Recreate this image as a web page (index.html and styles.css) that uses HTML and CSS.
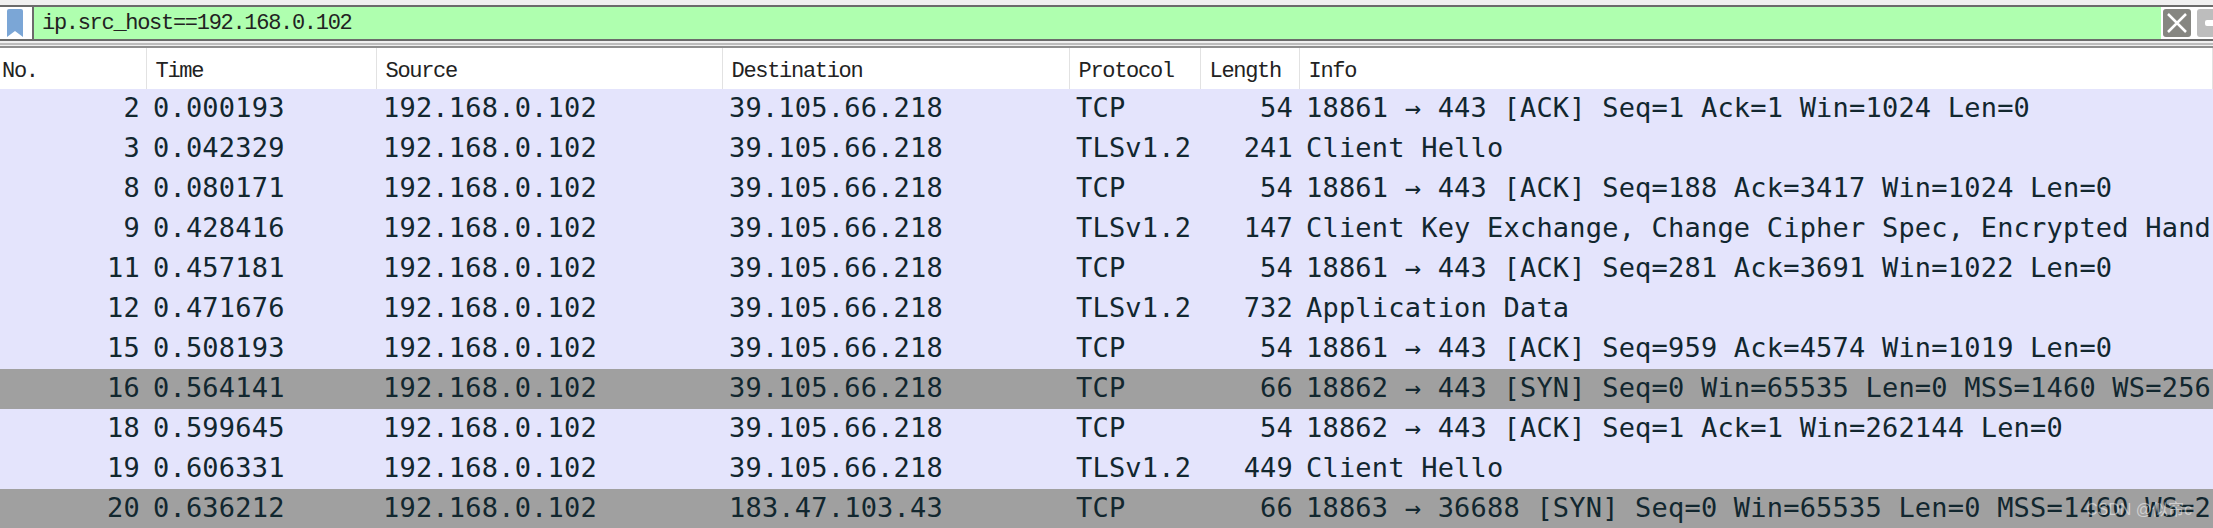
FILE: index.html
```html
<!DOCTYPE html>
<html lang="en">
<head>
    <meta charset="UTF-8">
    <meta name="viewport" content="width=device-width, initial-scale=1.0">
    <title>Packet list</title>
    <link rel="stylesheet" href="styles.css">
</head>
<body>
    <div class="filter-bar">
        <span class="bookmark">
            <svg width="16" height="28" viewBox="0 0 16 28"><path d="M2 0h12a2 2 0 0 1 2 2v26l-8-6-8 6V2a2 2 0 0 1 2-2z" fill="#7ba6d6"/></svg>
        </span>
        <div class="filter-input">ip.src_host==192.168.0.102</div>
        <span class="btn btn-clear">
            <svg width="28" height="28" viewBox="0 0 28 28"><path d="M5 5l18 18M23 5L5 23" stroke="#fff" stroke-width="2.5" fill="none"/></svg>
        </span>
        <span class="btn btn-more"><span class="more-dash"></span></span>
    </div>
    <div class="divider"></div>

    <table class="packets">
        <colgroup>
            <col class="col-no">
            <col class="col-time">
            <col class="col-source">
            <col class="col-dest">
            <col class="col-proto">
            <col class="col-length">
            <col class="col-info">
        </colgroup>
        <thead>
            <tr>
                <th>No.</th>
                <th>Time</th>
                <th>Source</th>
                <th>Destination</th>
                <th>Protocol</th>
                <th>Length</th>
                <th>Info</th>
            </tr>
        </thead>
        <tbody>
            <tr><td class="num">2</td><td>0.000193</td><td>192.168.0.102</td><td>39.105.66.218</td><td>TCP</td><td class="num">54</td><td>18861 → 443 [ACK] Seq=1 Ack=1 Win=1024 Len=0</td></tr>
            <tr><td class="num">3</td><td>0.042329</td><td>192.168.0.102</td><td>39.105.66.218</td><td>TLSv1.2</td><td class="num">241</td><td>Client Hello</td></tr>
            <tr><td class="num">8</td><td>0.080171</td><td>192.168.0.102</td><td>39.105.66.218</td><td>TCP</td><td class="num">54</td><td>18861 → 443 [ACK] Seq=188 Ack=3417 Win=1024 Len=0</td></tr>
            <tr><td class="num">9</td><td>0.428416</td><td>192.168.0.102</td><td>39.105.66.218</td><td>TLSv1.2</td><td class="num">147</td><td>Client Key Exchange, Change Cipher Spec, Encrypted Hand</td></tr>
            <tr><td class="num">11</td><td>0.457181</td><td>192.168.0.102</td><td>39.105.66.218</td><td>TCP</td><td class="num">54</td><td>18861 → 443 [ACK] Seq=281 Ack=3691 Win=1022 Len=0</td></tr>
            <tr><td class="num">12</td><td>0.471676</td><td>192.168.0.102</td><td>39.105.66.218</td><td>TLSv1.2</td><td class="num">732</td><td>Application Data</td></tr>
            <tr><td class="num">15</td><td>0.508193</td><td>192.168.0.102</td><td>39.105.66.218</td><td>TCP</td><td class="num">54</td><td>18861 → 443 [ACK] Seq=959 Ack=4574 Win=1019 Len=0</td></tr>
            <tr class="syn"><td class="num">16</td><td>0.564141</td><td>192.168.0.102</td><td>39.105.66.218</td><td>TCP</td><td class="num">66</td><td>18862 → 443 [SYN] Seq=0 Win=65535 Len=0 MSS=1460 WS=256</td></tr>
            <tr><td class="num">18</td><td>0.599645</td><td>192.168.0.102</td><td>39.105.66.218</td><td>TCP</td><td class="num">54</td><td>18862 → 443 [ACK] Seq=1 Ack=1 Win=262144 Len=0</td></tr>
            <tr><td class="num">19</td><td>0.606331</td><td>192.168.0.102</td><td>39.105.66.218</td><td>TLSv1.2</td><td class="num">449</td><td>Client Hello</td></tr>
            <tr class="syn"><td class="num">20</td><td>0.636212</td><td>192.168.0.102</td><td>183.47.103.43</td><td>TCP</td><td class="num">66</td><td>18863 → 36688 [SYN] Seq=0 Win=65535 Len=0 MSS=1460 WS=2</td></tr>
        </tbody>
    </table>

    <div class="watermark">CSDN @似帘c</div>
</body>
</html>
```

FILE: styles.css
```css
html, body {
    height: 100%;
}

body {
    margin: 0;
    padding-top: 5px;
    box-sizing: border-box;
    background-color: #f0f0f0;
    overflow: hidden;
    position: relative;
}

.filter-bar {
    display: flex;
    height: 32px;
    border-top: 2px solid #6b6b6b;
    border-bottom: 2px solid #6b6b6b;
    background: white;
}

.bookmark {
    width: 34px;
    padding: 2px 0 0 7px;
    box-sizing: border-box;
    border-right: 2px solid #6b6b6b;
    line-height: 0;
}

.filter-input {
    flex: 1;
    padding: 2px 0 0 8px;
    background-color: #afffaf;
    color: #222;
    font-family: "Liberation Mono", monospace;
    font-size: 22px;
    letter-spacing: -1.3px;
    line-height: 30px;
}

.btn {
    flex: none;
    width: 28px;
    height: 28px;
    margin-top: 2px;
    border-radius: 3px;
    line-height: 0;
}

.btn-clear {
    margin-left: 2px;
    background-color: #868681;
}

.btn-more {
    margin-left: 6px;
    margin-right: -12px;
    padding: 11px 0 0 8px;
    box-sizing: border-box;
    background-color: #bdbdbd;
}

.more-dash {
    display: block;
    height: 6px;
    border-radius: 2px;
    background: white;
}

.divider {
    height: 5px;
    margin-top: 2px;
    border-top: 2px solid #bcbcbc;
    border-bottom: 2px solid #8f8f8f;
    box-sizing: border-box;
}

.packets {
    width: 2213px;
    table-layout: fixed;
    border-collapse: collapse;
    background: white;
    font-family: "DejaVu Sans Mono", monospace;
}

.col-no { width: 146px; }
.col-time { width: 230px; }
.col-source { width: 346px; }
.col-dest { width: 347px; }
.col-proto { width: 131px; }
.col-length { width: 99px; }

th {
    box-sizing: border-box;
    height: 41px;
    padding: 5px 0 0 9px;
    border-right: 1px solid #e2e2e2;
    font-family: "Liberation Mono", monospace;
    font-size: 22px;
    font-weight: normal;
    letter-spacing: -1.3px;
    text-align: left;
    color: #222;
}

th:first-child {
    padding-left: 2px;
}

td {
    box-sizing: border-box;
    height: 40px;
    padding: 0 0 3px 7px;
    font-size: 27px;
    letter-spacing: 0.2px;
    color: #12272f;
    white-space: nowrap;
    overflow: hidden;
    background-color: #e4e4fc;
}

td.num {
    padding: 0 6px 3px 0;
    text-align: right;
}

.syn td {
    background-color: #a0a0a0;
}

.watermark {
    position: absolute;
    right: 21px;
    bottom: 8px;
    font-family: "Liberation Sans", "Noto Sans CJK SC", sans-serif;
    font-size: 16px;
    color: rgba(255, 255, 255, 0.5);
}
```
